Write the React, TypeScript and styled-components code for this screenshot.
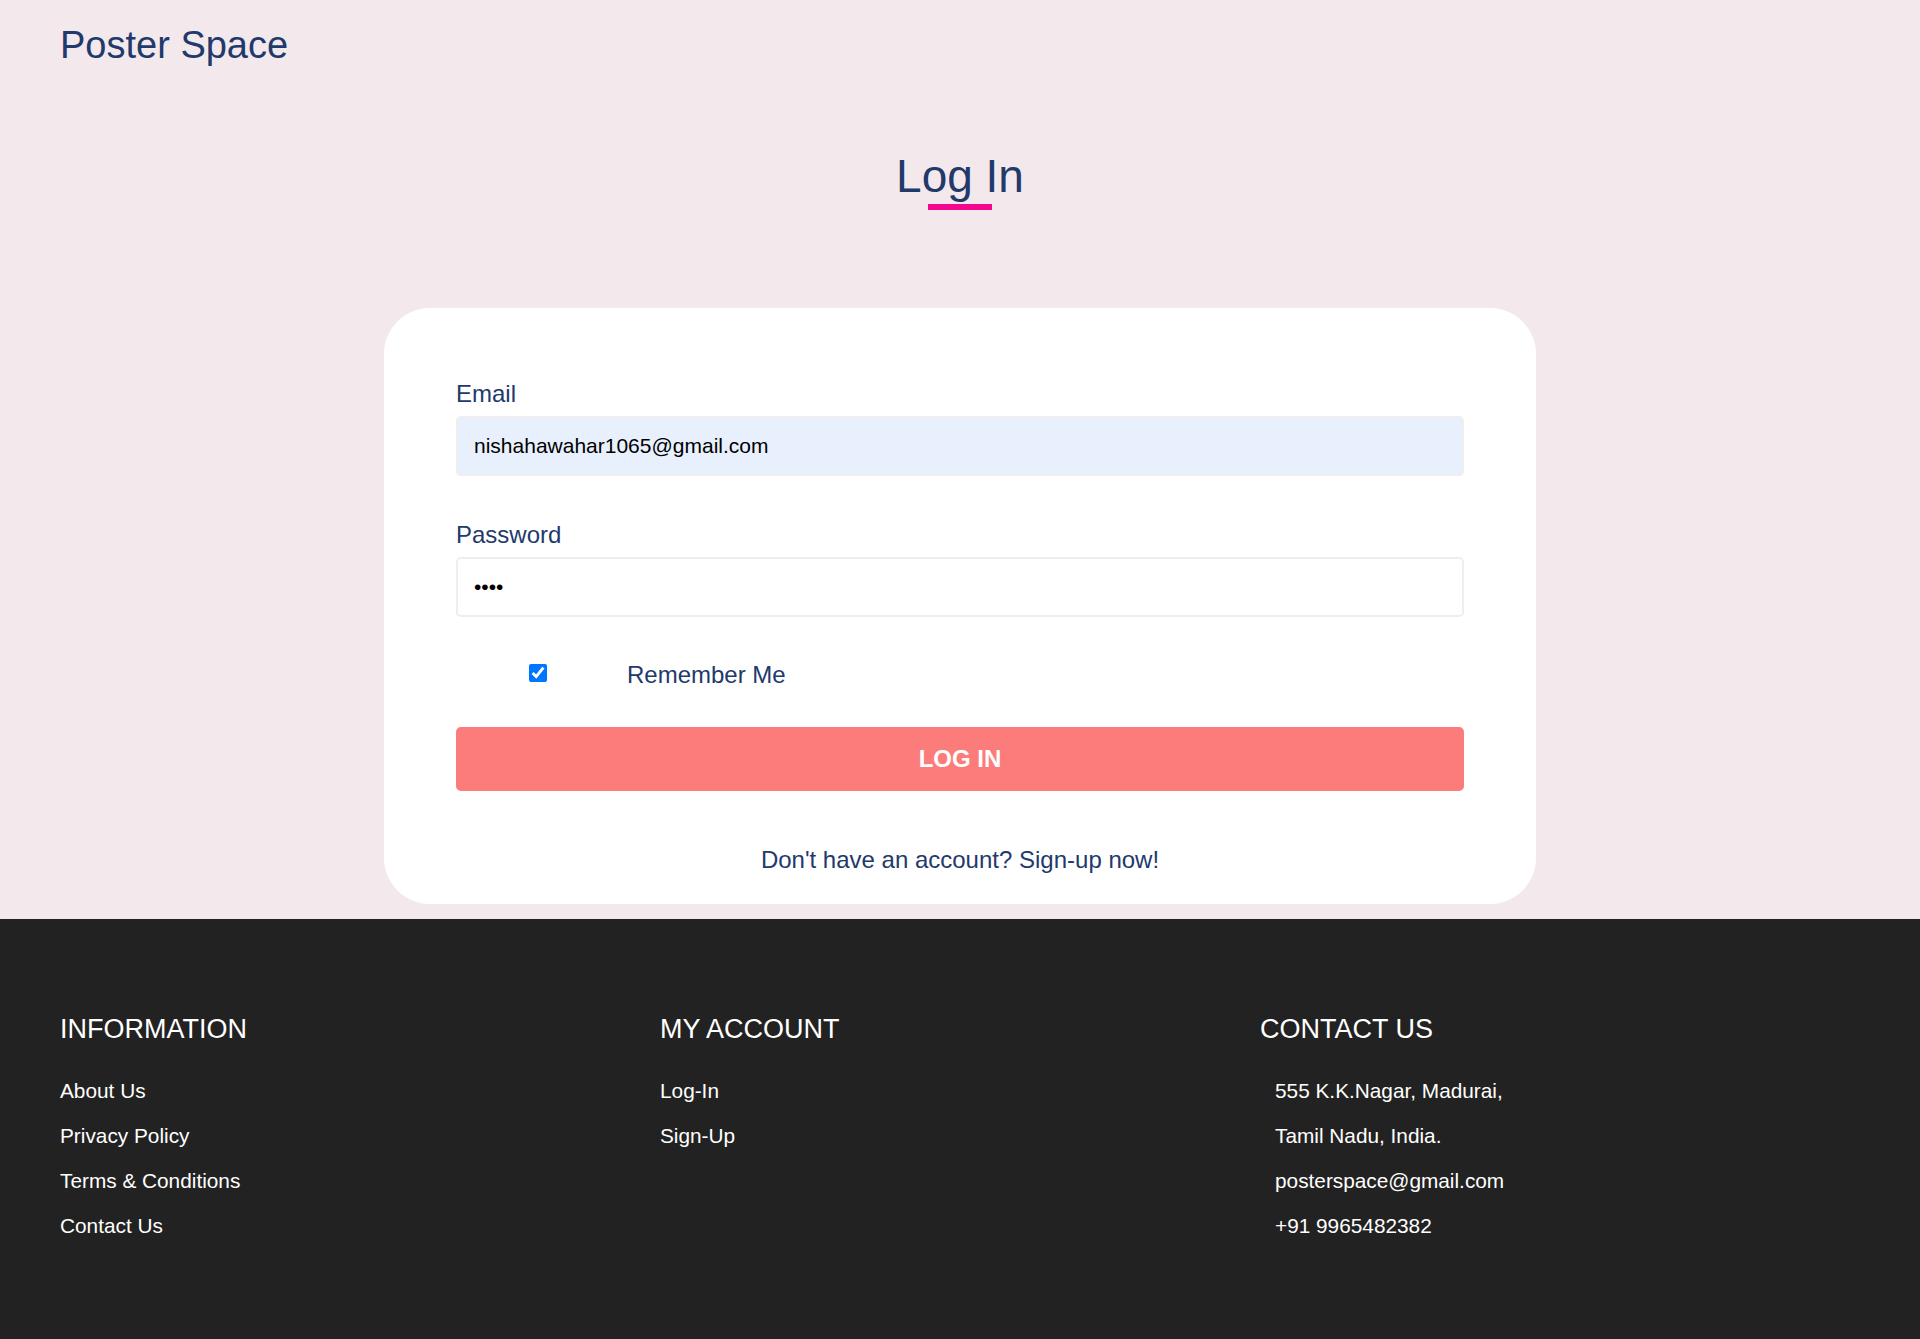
import React from "react";
import styled, { createGlobalStyle } from "styled-components";

const NAVY = "#22396c";

const GlobalStyle = createGlobalStyle`
  * { box-sizing: border-box; }
  html, body { margin: 0; padding: 0; }
  body {
    background: #f3e9ed;
    font-family: "Liberation Sans", Arial, sans-serif;
  }
`;

const Page = styled.div`
  min-height: 100vh;
  display: flex;
  flex-direction: column;
`;

const Header = styled.header`
  padding: 23px 60px 0;
`;

const Brand = styled.div`
  font-size: 38px;
  line-height: 44px;
  color: ${NAVY};
`;

const Main = styled.main`
  display: flex;
  flex-direction: column;
  align-items: center;
  padding: 83px 0 15px;
`;

const Title = styled.h1`
  margin: 0;
  font-size: 46px;
  line-height: 53px;
  font-weight: 400;
  color: ${NAVY};
`;

const TitleBar = styled.div`
  width: 64px;
  height: 6px;
  margin-top: 1px;
  background: #f2078e;
`;

const Card = styled.form`
  margin-top: 98px;
  width: 1152px;
  background: #ffffff;
  border-radius: 46px;
  padding: 72px 72px 30px;
`;

const Field = styled.div<{ $gap: number }>`
  margin-bottom: ${(p) => p.$gap}px;
`;

const Label = styled.label`
  display: block;
  font-size: 24px;
  line-height: 28px;
  color: ${NAVY};
  margin-bottom: 8px;
`;

const Input = styled.input<{ $filled?: boolean }>`
  display: block;
  width: 100%;
  height: 60px;
  border: 2px solid #eeeeee;
  border-radius: 5px;
  padding: 0 16px;
  font-family: "Liberation Sans", Arial, sans-serif;
  font-size: 21px;
  color: #000;
  background: ${(p) => (p.$filled ? "#e8f0fe" : "#ffffff")};
  outline: none;
`;

const CheckRow = styled.div`
  display: flex;
  align-items: center;
  height: 28px;
`;

const Check = styled.input`
  width: 18px;
  height: 18px;
  margin: 0 0 4px 73px;
`;

const CheckLabel = styled.label`
  margin-left: 80px;
  font-size: 24px;
  line-height: 28px;
  color: ${NAVY};
`;

const SubmitButton = styled.button`
  display: block;
  width: 100%;
  height: 64px;
  margin-top: 38px;
  border: none;
  border-radius: 5px;
  background: #fc7c7b;
  color: #ffffff;
  font-family: "Liberation Sans", Arial, sans-serif;
  font-size: 24px;
  font-weight: 700;
  cursor: pointer;
`;

const SignupText = styled.p`
  margin: 55px 0 0;
  text-align: center;
  font-size: 24px;
  line-height: 28px;
  color: ${NAVY};
`;

const Footer = styled.footer`
  flex: 1;
  background: #222222;
  padding: 95px 60px 100px;
  display: grid;
  grid-template-columns: repeat(3, 1fr);
`;

const FooterCol = styled.div``;

const FooterHeading = styled.h3`
  margin: 0 0 34px;
  font-size: 27px;
  line-height: 31px;
  font-weight: 400;
  color: #ffffff;
`;

const FooterList = styled.ul<{ $indent?: boolean }>`
  list-style: none;
  margin: 0;
  padding: 0 0 0 ${(p) => (p.$indent ? "15px" : "0")};
  display: flex;
  flex-direction: column;
  gap: 21px;
`;

const FooterItem = styled.li`
  font-size: 20.8px;
  line-height: 24px;
  color: #ffffff;
`;

const footerCols = [
  {
    title: "INFORMATION",
    items: ["About Us", "Privacy Policy", "Terms & Conditions", "Contact Us"],
  },
  { title: "MY ACCOUNT", items: ["Log-In", "Sign-Up"] },
  {
    title: "CONTACT US",
    items: [
      "555 K.K.Nagar, Madurai,",
      "Tamil Nadu, India.",
      "posterspace@gmail.com",
      "+91 9965482382",
    ],
    indent: true,
  },
];

export default function App() {
  return (
    <Page>
      <GlobalStyle />
      <Header>
        <Brand>Poster Space</Brand>
      </Header>
      <Main>
        <Title>Log In</Title>
        <TitleBar />
        <Card onSubmit={(e) => e.preventDefault()}>
          <Field $gap={45}>
            <Label htmlFor="email">Email</Label>
            <Input
              id="email"
              type="email"
              $filled
              defaultValue="nishahawahar1065@gmail.com"
            />
          </Field>
          <Field $gap={44}>
            <Label htmlFor="password">Password</Label>
            <Input id="password" type="password" defaultValue="1234" />
          </Field>
          <CheckRow>
            <Check id="remember" type="checkbox" defaultChecked />
            <CheckLabel htmlFor="remember">Remember Me</CheckLabel>
          </CheckRow>
          <SubmitButton type="submit">LOG IN</SubmitButton>
          <SignupText>Don't have an account? Sign-up now!</SignupText>
        </Card>
      </Main>
      <Footer>
        {footerCols.map((col) => (
          <FooterCol key={col.title}>
            <FooterHeading>{col.title}</FooterHeading>
            <FooterList $indent={col.indent}>
              {col.items.map((it) => (
                <FooterItem key={it}>{it}</FooterItem>
              ))}
            </FooterList>
          </FooterCol>
        ))}
      </Footer>
    </Page>
  );
}
